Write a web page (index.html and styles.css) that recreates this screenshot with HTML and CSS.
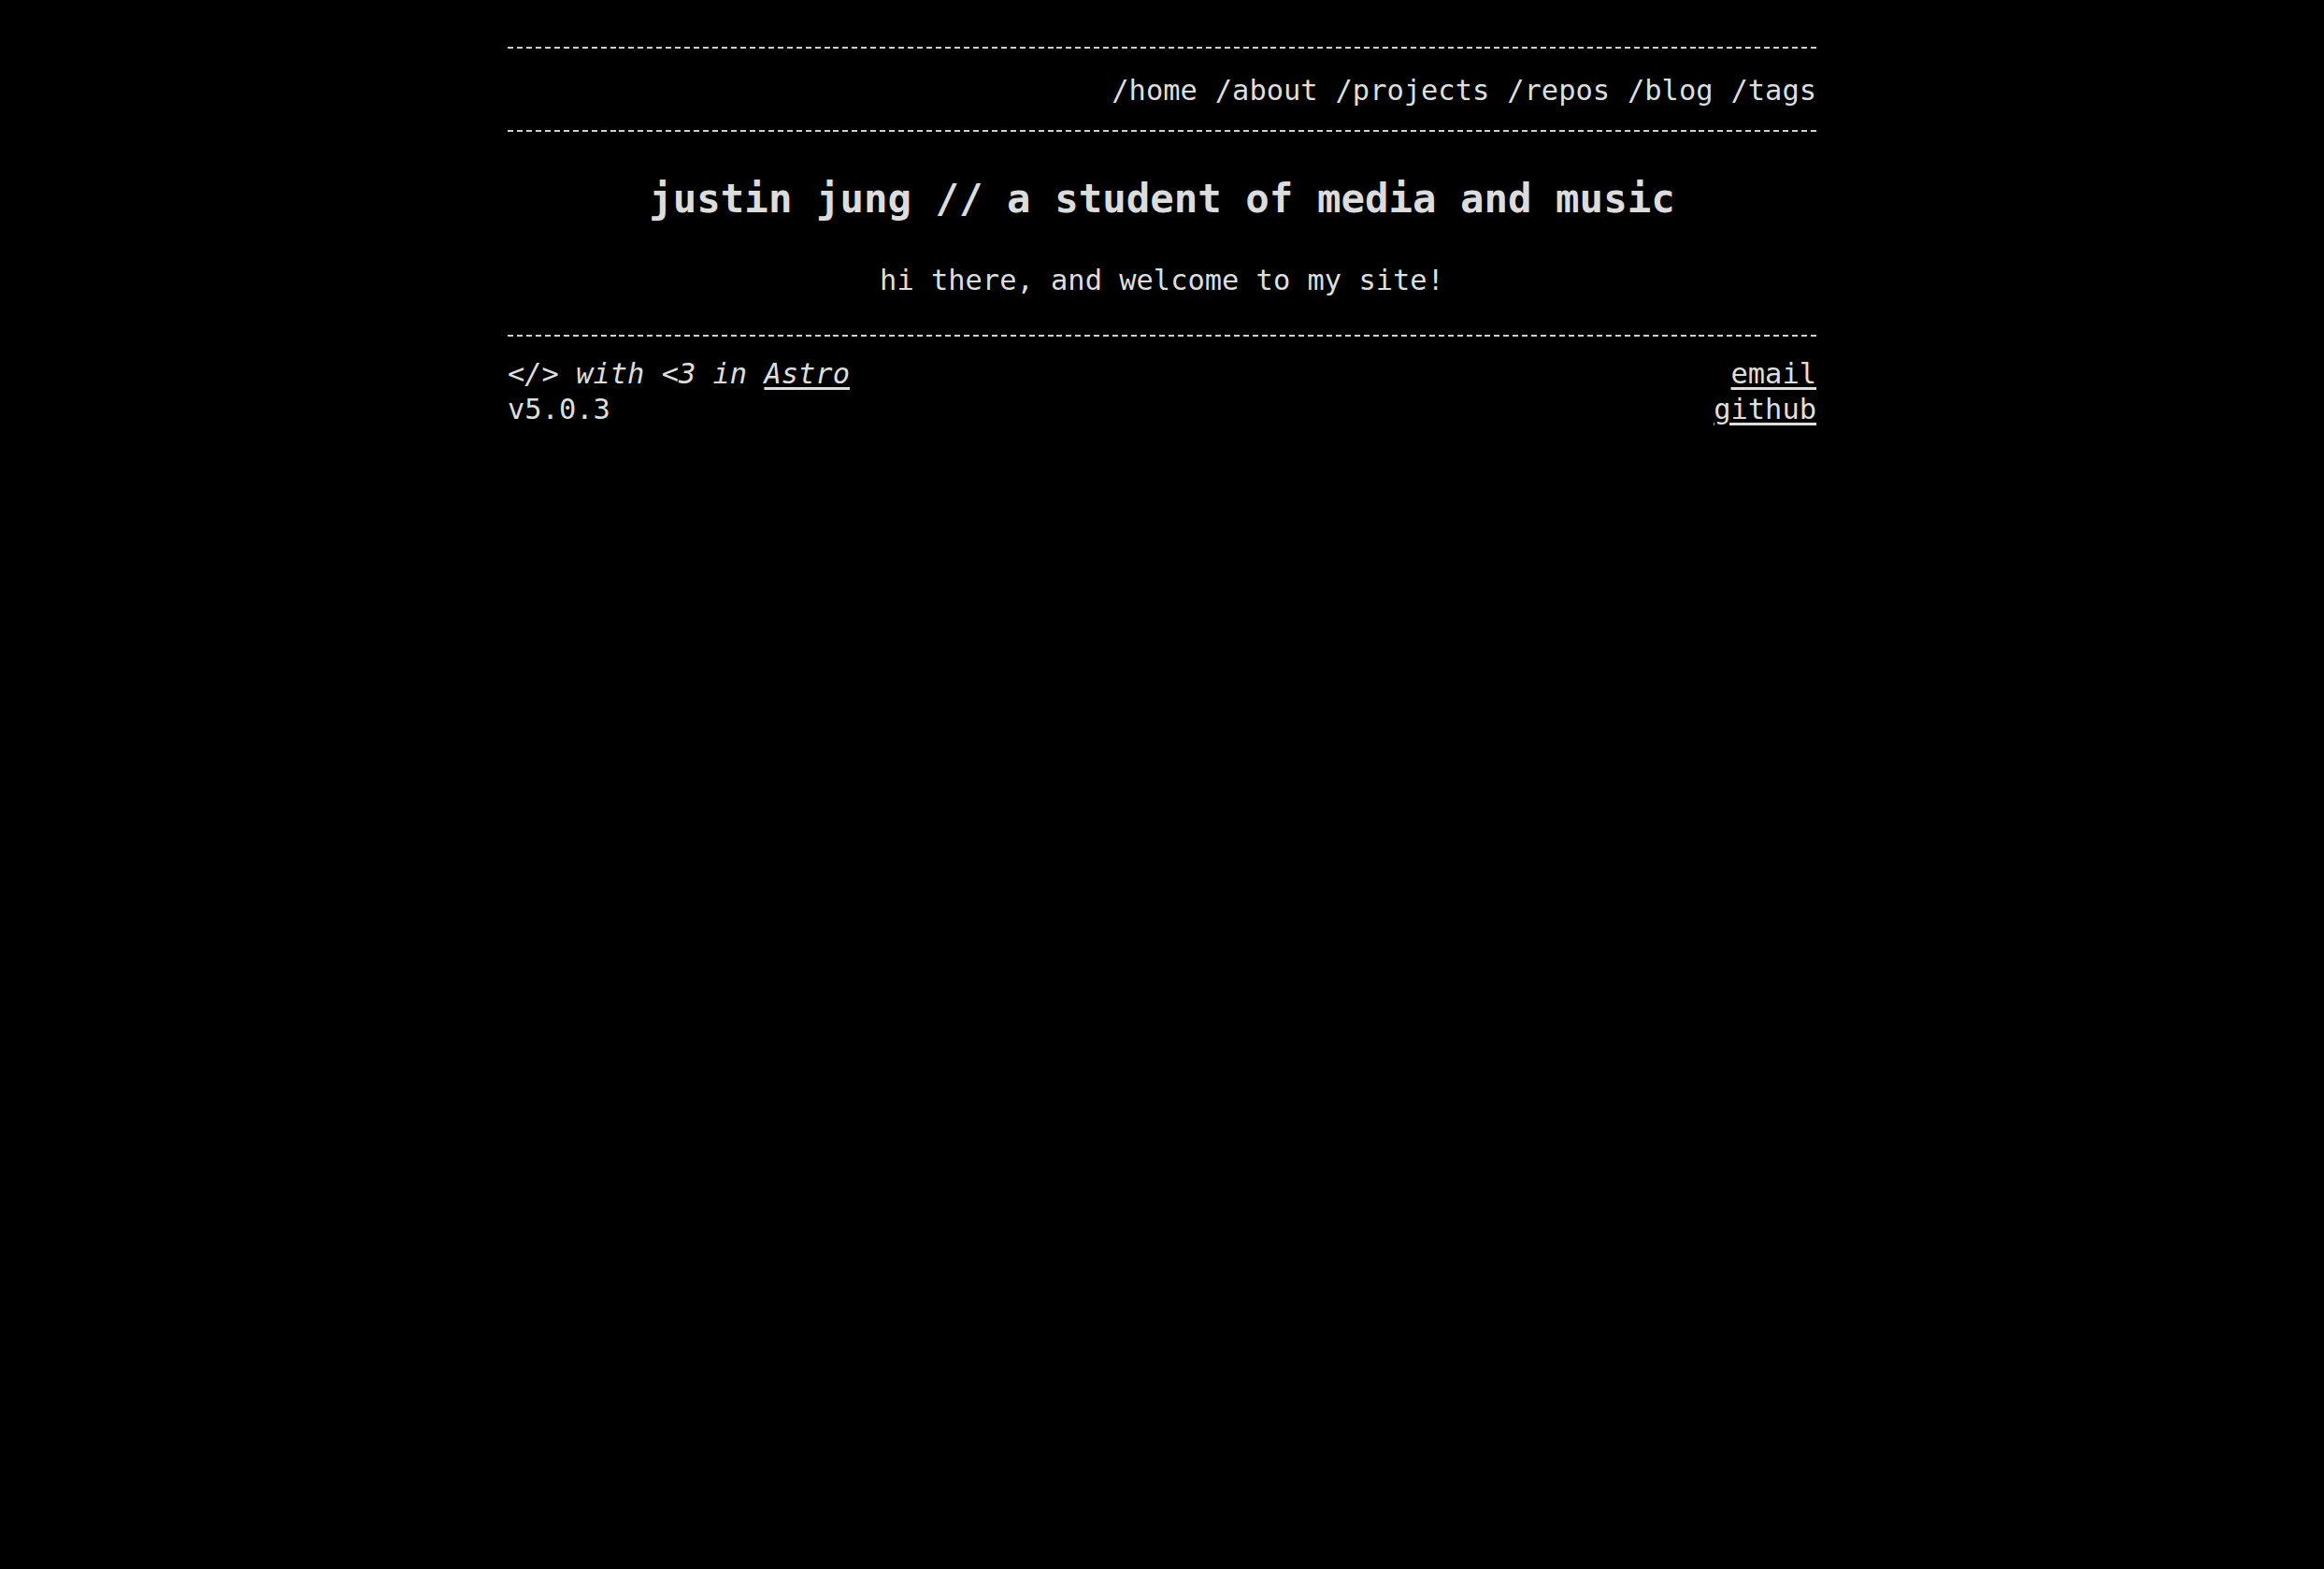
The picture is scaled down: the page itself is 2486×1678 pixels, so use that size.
FILE: index.html
```html
<!DOCTYPE html>
<html lang="en">
<head>
<meta charset="utf-8">
<title>justin jung</title>
<link rel="stylesheet" href="styles.css">
</head>
<body>
<div class="page">
  <header class="site-header">
    <div class="rule"></div>
    <nav class="nav">
      <a href="#">/home</a>
      <a href="#">/about</a>
      <a href="#">/projects</a>
      <a href="#">/repos</a>
      <a href="#">/blog</a>
      <a href="#">/tags</a>
    </nav>
    <div class="rule"></div>
  </header>
  <main class="intro">
    <h1 class="title">justin jung // a student of media and music</h1>
    <p class="welcome">hi there, and welcome to my site!</p>
  </main>
  <div class="rule"></div>
  <footer class="site-footer">
    <div class="footer-left">
      <div class="made"><em>&lt;/&gt; with &lt;3 in <a href="#">Astro</a></em></div>
      <div class="version">v5.0.3</div>
    </div>
    <div class="footer-right">
      <a href="#">email</a>
      <a href="#">github</a>
    </div>
  </footer>
</div>
</body>
</html>
```

FILE: styles.css
```css
html, body {
  background: #000;
}
body {
  margin: 0;
  color: #dedede;
  font-family: "DejaVu Sans Mono", "Liberation Mono", monospace;
  font-size: 30.4px;
  line-height: 38px;
}
a {
  color: inherit;
}
.page {
  width: 1400px;
  margin: 0 auto;
  padding-top: 50px;
}
.rule {
  height: 2px;
  background: repeating-linear-gradient(to right, #cfcfcf 0 6px, transparent 6px 9.957px);
}
.nav {
  display: flex;
  justify-content: flex-end;
  gap: 19px;
  padding: 26px 0 23px;
}
.nav a {
  text-decoration: none;
}
.intro {
  text-align: center;
  padding: 46px 0 39px;
}
.title {
  margin: 0;
  font-size: 42.4px;
  line-height: 51px;
  font-weight: bold;
  color: #dcdcdc;
}
.welcome {
  margin: 43px 0 0;
}
.site-footer {
  display: flex;
  justify-content: space-between;
  padding-top: 21px;
}
.footer-right {
  display: flex;
  flex-direction: column;
  align-items: flex-end;
}
.made a, .footer-right a {
  text-decoration: underline;
  text-underline-offset: 4px;
}
```
